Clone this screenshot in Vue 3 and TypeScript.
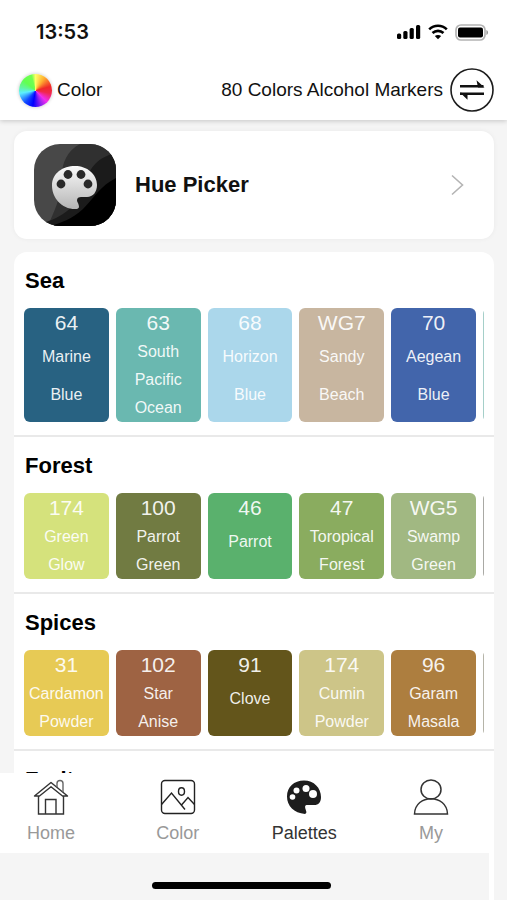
<script setup lang="ts">
interface Swatch {
  code: string
  lines: string[]
  color: string
}

interface Palette {
  title: string
  swatches: Swatch[]
}

const swatch = (code: string, name: string, color: string): Swatch => ({
  code,
  lines: name ? name.split(' ') : [],
  color,
})

const palettes: Palette[] = [
  {
    title: 'Sea',
    swatches: [
      swatch('64', 'Marine Blue', '#286282'),
      swatch('63', 'South Pacific Ocean', '#6ab8b0'),
      swatch('68', 'Horizon Blue', '#abd7eb'),
      swatch('WG7', 'Sandy Beach', '#c8b6a0'),
      swatch('70', 'Aegean Blue', '#4265ab'),
      swatch('', '', '#a5cfc9'),
    ],
  },
  {
    title: 'Forest',
    swatches: [
      swatch('174', 'Green Glow', '#d5e27c'),
      swatch('100', 'Parrot Green', '#717b42'),
      swatch('46', 'Parrot', '#5ab16d'),
      swatch('47', 'Toropical Forest', '#8aac5f'),
      swatch('WG5', 'Swamp Green', '#a1b882'),
      swatch('', '', '#a9a9a5'),
    ],
  },
  {
    title: 'Spices',
    swatches: [
      swatch('31', 'Cardamon Powder', '#e7ca55'),
      swatch('102', 'Star Anise', '#9e6343'),
      swatch('91', 'Clove', '#63551b'),
      swatch('174', 'Cumin Powder', '#cdc588'),
      swatch('96', 'Garam Masala', '#ad7e3f'),
      swatch('', '', '#b5b4a8'),
    ],
  },
  { title: 'Fruits', swatches: [] },
]

const maxLines = (p: Palette): number => Math.max(0, ...p.swatches.map((s) => s.lines.length))

// Names with fewer lines than the row allows are set with looser leading.
const isLoose = (p: Palette, s: Swatch): boolean => s.lines.length < maxLines(p)
</script>

<template>
  <div class="app">
    <header class="top">
      <div class="status">
        <span class="time">13:53</span>
        <div class="signals">
          <svg width="25" height="16" viewBox="0 0 25 16" aria-hidden="true">
            <rect x="1" y="9.500" width="4.200" height="5.500" rx="1.500" />
            <rect x="7.300" y="7" width="4.200" height="8" rx="1.500" />
            <rect x="13.600" y="4" width="4.200" height="11" rx="1.500" />
            <rect x="20" y="1" width="4.200" height="14" rx="1.500" />
          </svg>
          <svg width="20" height="16" viewBox="0 0 20 16" fill="none" stroke="#000" stroke-width="2.600" aria-hidden="true">
            <path d="M1.200 5.400C6.200.6 13.800.6 18.800 5.400" />
            <path d="M4.500 9C7.700 6.100 12.300 6.100 15.500 9" />
            <path d="M10 15.200 6.800 12C8.600 10.500 11.400 10.500 13.200 12Z" fill="#000" stroke="none" />
          </svg>
          <svg width="34" height="17" viewBox="0 0 34 17" aria-hidden="true">
            <rect x="1" y="1" width="29" height="15" rx="5" fill="#fff" stroke="#b3b3b3" stroke-width="1.700" />
            <rect x="3" y="3.500" width="25" height="10" rx="2" />
            <path d="M31.400 6v5c2.200-.8 2.200-4.200 0-5Z" fill="#999" />
          </svg>
        </div>
      </div>
      <div class="toolbar">
        <button class="color-button" type="button">
          <span class="wheel"></span>
          <span>Color</span>
        </button>
        <button class="set-button" type="button">
          <span>80 Colors Alcohol Markers</span>
          <svg width="44" height="44" viewBox="0 0 44 44" aria-hidden="true">
            <circle cx="22" cy="22" r="21" fill="none" stroke="#1c1c1c" stroke-width="1.600" />
            <path d="M10 17h23.500v2.400H10zM10 24.600h24V27H10z" fill="#111" />
            <path d="M26.500 12.200 34.500 19.400h-6.500ZM10 24.600l7.500 7.200V26Z" fill="#111" />
          </svg>
        </button>
      </div>
    </header>

    <main class="content">
      <a class="picker" href="#hue-picker">
        <svg class="picker-icon" viewBox="0 0 82 82" aria-hidden="true">
          <defs>
            <clipPath id="tile"><rect width="82" height="82" rx="26" /></clipPath>
            <linearGradient id="silver" x1="0" y1="0" x2="0" y2="1">
              <stop offset="0" stop-color="#fafafa" />
              <stop offset="1" stop-color="#b5b5b5" />
            </linearGradient>
          </defs>
          <g clip-path="url(#tile)">
            <rect width="82" height="82" fill="#484848" />
            <path d="M46 0C33 7 28 18 27 36 27 56 20 66 14 82h68V0Z" fill="#303030" />
            <path d="M82 9C64 13 56 23 51 39 45 60 31 72 12 78v4h70Z" fill="#1b1b1b" />
            <path d="M82 34C66 42 61 53 49 65 37 76 27 78 18 82h64Z" fill="#000" />
          </g>
          <path
            d="M43 65C28 66 18 54 18 41.500C18 29 29 22 41 22s22 8 22 19c0 7-4 12-10 12h-6c-4 0-5 3-3 6 1 3 2 5-1 6Z"
            fill="url(#silver)"
          />
          <g fill="#292929">
            <circle cx="27" cy="40" r="4.400" />
            <circle cx="34" cy="30.500" r="4.400" />
            <circle cx="47" cy="30.500" r="4.400" />
            <circle cx="54" cy="40" r="4.400" />
          </g>
        </svg>
        <span class="picker-title">Hue Picker</span>
        <svg width="13" height="22" viewBox="0 0 13 22" fill="none" stroke="#b4b4b4" stroke-width="1.600" aria-hidden="true">
          <path d="M1 1.500 11.500 11 1 20.500" />
        </svg>
      </a>

      <div class="palettes">
        <section v-for="p in palettes" :key="p.title" class="palette">
          <h2>{{ p.title }}</h2>
          <div class="row">
            <div
              v-for="(s, i) in p.swatches"
              :key="i"
              class="swatch"
              :style="{ backgroundColor: s.color }"
            >
              <span class="code">{{ s.code }}</span>
              <span v-for="line in s.lines" :key="line" class="name" :class="{ loose: isLoose(p, s) }">{{ line }}</span>
            </div>
          </div>
        </section>
      </div>
    </main>

    <footer class="dock">
      <nav class="tabs">
        <a class="tab" href="#home">
          <svg width="36" height="36" viewBox="0 0 36 36" fill="none" stroke="#333" stroke-width="1.400" aria-hidden="true">
            <path d="M1.500 17 18 3.500 34.500 17H29.500L18 7.800 6.500 17Z" stroke-linejoin="round" />
            <path d="M5.500 17v18h25V17M12.500 35V20.500h10.500V35" />
            <path d="M24 8V4.500c0-4 6-4 6 0V13" stroke="#666" />
          </svg>
          <span>Home</span>
        </a>
        <a class="tab" href="#color">
          <svg width="36" height="36" viewBox="0 0 36 36" fill="none" stroke="#222" stroke-width="1.400" aria-hidden="true">
            <rect x="1.500" y="1.500" width="33" height="33" rx="3.500" />
            <ellipse cx="21.500" cy="12.500" rx="3" ry="3.700" />
            <path d="M1.500 25.500 11.500 14 25 30.500M21.500 26 28 18.500 34.500 25.500" />
          </svg>
          <span>Color</span>
        </a>
        <a class="tab active" href="#palettes" aria-current="page">
          <svg width="36" height="36" viewBox="0 0 36 36" aria-hidden="true">
            <path
              d="M19 35C8 34 1 27 1 17.500 1 8 8 1.500 18 1.500S35 9 35 18c0 6-3 8.500-8 8h-5.500c-3 0-2.500 2-2 4s2 4-.5 5Z"
              fill="#1d1d1d"
            />
            <g fill="#fff">
              <circle cx="6.500" cy="18" r="2.800" />
              <circle cx="10.500" cy="11.500" r="3" />
              <circle cx="20" cy="9.500" r="3.500" />
              <circle cx="27" cy="15" r="4" />
            </g>
          </svg>
          <span>Palettes</span>
        </a>
        <a class="tab" href="#my">
          <svg width="36" height="36" viewBox="0 0 36 36" fill="none" stroke="#333" stroke-width="1.500" aria-hidden="true">
            <ellipse cx="18" cy="10.500" rx="10" ry="9.500" />
            <path d="M1.500 35C2 14.500 34 14.500 34.500 35Z" />
          </svg>
          <span>My</span>
        </a>
      </nav>
      <div class="home-area"><span class="home-bar"></span></div>
    </footer>
  </div>
</template>

<style>
body {
  background: #f5f5f5;
}
</style>

<style scoped>
.app {
  display: flex;
  flex-direction: column;
  height: 100vh;
  font-family: "Liberation Sans", Arial, sans-serif;
  color: #111;
}

button {
  border: 0;
  padding: 0;
  background: none;
  color: inherit;
  font: inherit;
}

a {
  color: inherit;
  text-decoration: none;
}

.top {
  position: relative;
  flex: none;
  background: #fff;
  box-shadow: 0 1px 5px rgba(0, 0, 0, 0.2);
}

.status {
  display: flex;
  justify-content: space-between;
  align-items: center;
  height: 60px;
  padding: 4px 18px 0 36px;
  box-sizing: border-box;
}

.time {
  font: 600 20px/24px Inter, sans-serif;
}

.signals {
  display: flex;
  align-items: center;
  gap: 7px;
}

.toolbar {
  display: flex;
  justify-content: space-between;
  align-items: center;
  height: 60px;
  padding: 0 13px 0 19px;
  font-size: 19px;
}

.color-button,
.set-button {
  display: flex;
  align-items: center;
}

.color-button {
  gap: 5px;
}

.set-button {
  gap: 7px;
}

.wheel {
  width: 33px;
  height: 33px;
  border-radius: 50%;
  background: conic-gradient(#ff6, #ffb030 35deg, #f02828 75deg, #f0284a 100deg, #f02cf0 135deg, #8a20ee 160deg, #00f 190deg, #1048ff 220deg, #5cf0ff 260deg, #62f5a0 282deg, #62ff50 310deg, #70ff50 345deg, #ff6);
  box-shadow: 0 0 3px 1px #ddd;
}

.content {
  flex: 1;
  min-height: 0;
  overflow-y: auto;
  scrollbar-width: none;
  padding: 11px 13px 0 14px;
}

.picker {
  display: flex;
  align-items: center;
  padding: 13px 30px 13px 20px;
  border-radius: 13px;
  background: #fff;
  box-shadow: 0 0 5px rgba(0, 0, 0, 0.05);
}

.picker-icon {
  width: 82px;
  height: 82px;
}

.picker-title {
  flex: 1;
  margin-left: 19px;
  font-size: 22px;
  font-weight: 700;
}

.palettes {
  margin-top: 13px;
  border-radius: 13px;
  background: #fff;
  overflow: hidden;
}

.palette {
  padding: 0 10px 13px 10px;
  border-bottom: 2px solid #e9e9e9;
}

h2 {
  margin: 0;
  padding: 2px 0 0 1px;
  font-size: 22px;
  line-height: 54px;
  color: #000;
}

.row {
  display: grid;
  grid-auto-flow: column;
  grid-auto-columns: calc((100% - 36px) / 5);
  gap: 7px;
  overflow-x: auto;
  scrollbar-width: none;
}

.swatch {
  border-radius: 6px;
  color: rgba(255, 255, 255, 0.92);
  text-align: center;
}

.code {
  display: block;
  margin-bottom: 1px;
  font-size: 21px;
  line-height: 29px;
}

.name {
  display: block;
  font-size: 16px;
  line-height: 28px;
}

.name.loose {
  line-height: 38px;
}

.dock {
  position: relative;
  flex: none;
  margin-right: 13px;
  background: #fff;
}

.tabs {
  display: flex;
  justify-content: space-between;
  height: 80px;
  padding: 6px 23px 0 11px;
  box-sizing: border-box;
}

.tab {
  display: flex;
  flex-direction: column;
  align-items: center;
  gap: 7px;
  width: 80px;
  font-size: 18px;
  line-height: 22px;
  color: #999;
}

.tab.active {
  color: #333;
}

.home-area {
  display: flex;
  justify-content: center;
  height: 47px;
  margin-right: 5px;
  padding: 29px 6px 0 0;
  box-sizing: border-box;
  background: #f5f5f5;
}

.home-bar {
  width: 37%;
  height: 7px;
  border-radius: 4px;
  background: #000;
}
</style>
